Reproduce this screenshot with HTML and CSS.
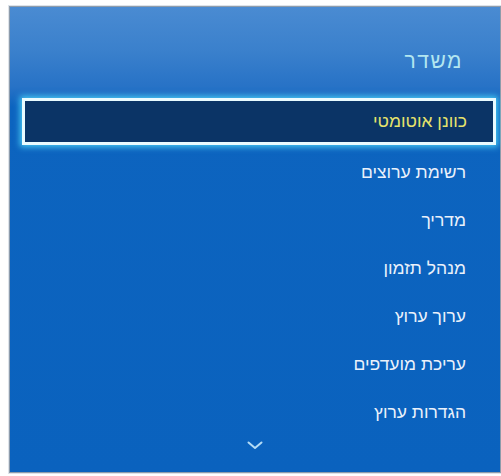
FILE: index.html
```html
<!DOCTYPE html>
<html lang="he" dir="rtl">
<head>
<meta charset="utf-8">
<title>משדר</title>
<link rel="stylesheet" href="styles.css">
</head>
<body>
<div class="panel">
  <div class="header"><span class="title">משדר</span></div>
  <ul class="menu">
    <li class="item active">כוונן אוטומטי</li>
    <li class="item">רשימת ערוצים</li>
    <li class="item">מדריך</li>
    <li class="item">מנהל תזמון</li>
    <li class="item">ערוך ערוץ</li>
    <li class="item">עריכת מועדפים</li>
    <li class="item">הגדרות ערוץ</li>
  </ul>
  <div class="more">
    <svg width="16" height="9" viewBox="0 0 16 9"><polyline points="1.5,1.5 8,7 14.5,1.5" fill="none" stroke="#b4dcf6" stroke-width="2" stroke-linecap="round" stroke-linejoin="round"/></svg>
  </div>
</div>
</body>
</html>
```
FILE: styles.css
```css
html, body {
  margin: 0;
  padding: 0;
  background: #ffffff;
}
body {
  width: 501px;
  height: 476px;
  overflow: hidden;
  font-family: "Liberation Sans", "DejaVu Sans", sans-serif;
}
.panel {
  box-sizing: border-box;
  margin: 6px 0 0 4px;
  width: 492px;
  height: 467px;
  border: 1px solid #8e9cab;
  box-shadow: 0 0 0 1px #dde3ea;
  background: linear-gradient(to bottom, #4a8bd2 0px, #3a80cc 45px, #2772c6 80px, #0d64bf 100px, #0a62be 467px);
  display: flex;
  flex-direction: column;
}
.header {
  height: 91px;
  display: flex;
  align-items: center;
  padding-right: 37px;
  padding-top: 16px;
  box-sizing: border-box;
}
.title {
  color: #b2e6f0;
  font-size: 21px;
  letter-spacing: 1.5px;
}
.menu {
  list-style: none;
  margin: 0;
  padding: 0;
}
.item {
  height: 48px;
  display: flex;
  align-items: center;
  padding-right: 34px;
  color: #eaf1fb;
  font-size: 17.5px;
}
.item.active {
  box-sizing: border-box;
  height: 47px;
  margin: 0 4px 3px 12px;
  padding-right: 26px;
  background: #0b3466;
  border: 3px solid #e9fbff;
  box-shadow: 0 0 6px 2px #47c9f2;
  color: #e6e36c;
}
.more {
  height: 18px;
  display: flex;
  justify-content: center;
  align-items: center;
}
```
